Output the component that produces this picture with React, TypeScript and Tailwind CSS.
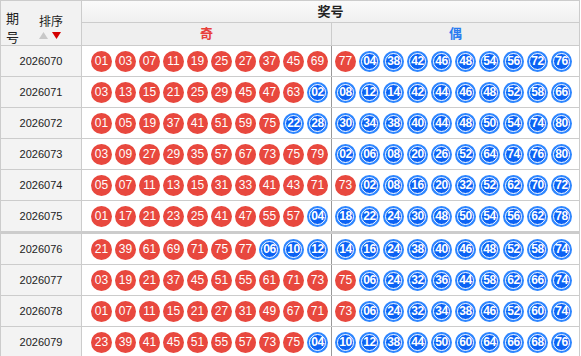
const rows: { issue: string; nums: string[] }[] = [
  { issue: "2026070", nums: "01 03 07 11 19 25 27 37 45 69 77 04 38 42 46 48 54 56 72 76".split(" ") },
  { issue: "2026071", nums: "03 13 15 21 25 29 45 47 63 02 08 12 14 42 44 46 48 52 58 66".split(" ") },
  { issue: "2026072", nums: "01 05 19 37 41 51 59 75 22 28 30 34 38 40 44 48 50 54 74 80".split(" ") },
  { issue: "2026073", nums: "03 09 27 29 35 57 67 73 75 79 02 06 08 20 26 52 64 74 76 80".split(" ") },
  { issue: "2026074", nums: "05 07 11 13 15 31 33 41 43 71 73 02 08 16 20 32 52 62 70 72".split(" ") },
  { issue: "2026075", nums: "01 17 21 23 25 41 47 55 57 04 18 22 24 30 48 50 54 56 62 78".split(" ") },
  { issue: "2026076", nums: "21 39 61 69 71 75 77 06 10 12 14 16 24 38 40 46 48 52 58 74".split(" ") },
  { issue: "2026077", nums: "03 19 21 37 45 51 55 61 71 73 75 06 24 32 36 44 58 62 66 74".split(" ") },
  { issue: "2026078", nums: "01 07 11 15 21 27 31 49 67 71 73 06 24 32 34 38 46 52 60 74".split(" ") },
  { issue: "2026079", nums: "23 39 41 45 51 55 57 73 75 04 10 12 38 44 50 60 64 66 68 76".split(" ") },
];

function Ball({ n }: { n: string }) {
  const odd = parseInt(n, 10) % 2 === 1;
  if (odd) {
    return (
      <div className="flex h-[21px] w-[21px] shrink-0 items-center justify-center rounded-full bg-[#e8483e] text-[12px] leading-none text-white">
        {n}
      </div>
    );
  }
  return (
    <div className="flex h-[21px] w-[21px] shrink-0 items-center justify-center rounded-full bg-[#2e86ff]">
      <div className="flex h-[17px] w-[17px] items-center justify-center rounded-full border border-white bg-[#0b62f4] text-[12px] font-bold leading-none tracking-[-0.5px] text-white">
        {n}
      </div>
    </div>
  );
}

export default function App() {
  return (
    <div className="h-[356px] w-[581px] overflow-hidden bg-white font-['Liberation_Sans','Noto_Sans_CJK_SC',sans-serif] text-[#333]">
      <div className="w-[580px] border-l border-t border-[#cccccc]">
        {/* 表头 */}
        <div className="flex h-[45px] border-b border-[#cccccc]">
          <div className="flex w-[81px] shrink-0 border-r border-[#cccccc] bg-[#f2f2f2] pl-[5px]">
            <div className="flex flex-col pt-[8px] text-[13px] leading-[19px] text-[#222]">
              <span>期</span>
              <span>号</span>
            </div>
            <div className="ml-[20px] flex flex-col items-start pt-[14px]">
              <span className="text-[12px] leading-[14px] text-[#222]">排序</span>
              <div className="mt-[3px] flex items-center gap-[4px]">
                <svg width="9" height="7" viewBox="0 0 9 7"><path d="M4.5 0L9 7H0z" fill="#c8c8c8" /></svg>
                <svg width="9" height="7" viewBox="0 0 9 7"><path d="M0 0H9L4.5 7z" fill="#d40000" /></svg>
              </div>
            </div>
          </div>
          <div className="flex flex-1 flex-col">
            <div className="flex h-[22px] items-center justify-center border-b border-r border-[#cccccc] bg-gradient-to-b from-[#fafafa] to-[#f0f0f0] text-[13px] font-bold text-[#222]">
              奖号
            </div>
            <div className="flex h-[22px] bg-[#efefef] text-[13px] font-bold">
              <div className="flex w-[250px] items-center justify-center border-r border-[#cccccc] text-[#e8403a]">奇</div>
              <div className="flex flex-1 items-center justify-center border-r border-[#cccccc] text-[#2a7cf0]">偶</div>
            </div>
          </div>
        </div>

        {/* 数据行 */}
        {rows.map((r, i) => (
          <div
            key={r.issue}
            className={
              i === 5
                ? "flex h-[33px] border-b-[3px] border-[#cccccc]"
                : "flex h-[31px] border-b border-[#cccccc]"
            }
          >
            <div className="flex w-[81px] shrink-0 items-center justify-center border-r border-[#cccccc] bg-[#f3f3f3] text-[11px] text-[#222]">
              {r.issue}
            </div>
            <div className="flex w-[250px] shrink-0 items-center gap-[3px] border-r border-[#999999] pl-[9px]">
              {r.nums.slice(0, 10).map((n, j) => (
                <Ball key={j} n={n} />
              ))}
            </div>
            <div className="flex flex-1 items-center gap-[3px] border-r border-[#cccccc] pl-[3px]">
              {r.nums.slice(10).map((n, j) => (
                <Ball key={j} n={n} />
              ))}
            </div>
          </div>
        ))}
      </div>
    </div>
  );
}
